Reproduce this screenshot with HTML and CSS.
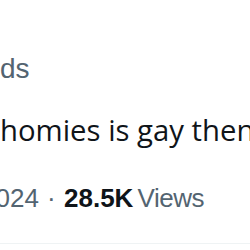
FILE: index.html
```html
<!DOCTYPE html>
<html lang="en">
<head>
    <meta charset="UTF-8">
    <meta name="viewport" content="width=device-width, initial-scale=1.0">
    <title>Post</title>
    <link rel="stylesheet" href="styles.css">
</head>
<body>

<div class="post">
    <div class="handle">ds</div>
    <div class="text">homies is gay then</div>
    <div class="meta">
        <span class="date">2024</span>
        <span class="dot">·</span>
        <span class="views">28.5K</span>
        <span class="label">Views</span>
    </div>
</div>

</body>
</html>
```

FILE: styles.css
```css
body {
    margin: 0;
    padding: 0;
    background-color: #fff;
    overflow: hidden;
    width: 250px;
    height: 250px;
}
.post {
    white-space: nowrap;
    border-bottom: 1px solid #eff3f4;
    height: 244px;
    box-sizing: border-box;
}
.handle {
    font-family: 'Liberation Sans', Arial, sans-serif;
    font-size: 28px;
    color: #536471;
    line-height: 32px;
    padding-top: 53px;
}
.text {
    font-family: 'Open Sans', sans-serif;
    font-size: 29.3px;
    color: #0f1419;
    line-height: 40px;
    margin-top: 25px;
}
.meta {
    font-family: 'Liberation Sans', Arial, sans-serif;
    font-size: 26px;
    color: #536471;
    line-height: 32px;
    margin-top: 32px;
    margin-left: -19px;
}
.meta .dot {
    padding: 0 1px;
}
.meta .views {
    font-weight: bold;
    color: #0f1419;
}
.meta .label {
    margin-left: -3px;
    letter-spacing: -0.5px;
}
```
